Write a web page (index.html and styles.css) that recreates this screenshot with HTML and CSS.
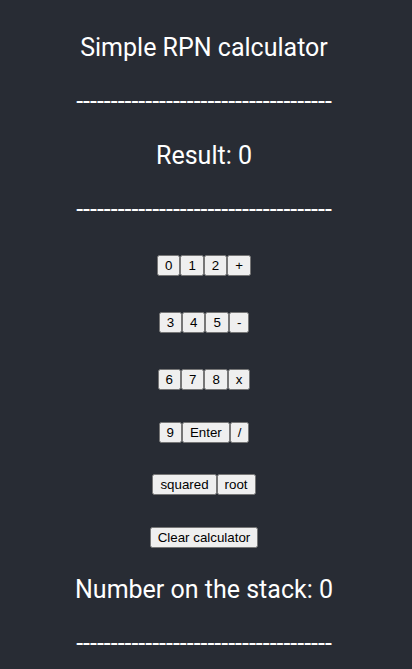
FILE: index.html
```html
<!DOCTYPE html>
<html lang="en">
<head>
<meta charset="utf-8">
<title>Simple RPN calculator</title>
<link rel="stylesheet" href="styles.css">
</head>
<body>
<div class="app">
  <p class="line title">Simple RPN calculator</p>
  <p class="line rule">-------------------------------------</p>
  <p class="line">Result: 0</p>
  <p class="line rule">-------------------------------------</p>
  <div class="keys first"><button>0</button><button>1</button><button>2</button><button>+</button></div>
  <div class="keys wide"><button>3</button><button>4</button><button>5</button><button>-</button></div>
  <div class="keys wide"><button>6</button><button>7</button><button>8</button><button>x</button></div>
  <div class="keys"><button>9</button><button>Enter</button><button>/</button></div>
  <div class="keys first"><button>squared</button><button>root</button></div>
  <div class="keys"><button>Clear calculator</button></div>
  <p class="line stack">Number on the stack: 0</p>
  <p class="line rule">-------------------------------------</p>
</div>
</body>
</html>
```

FILE: styles.css
```css
html, body {
  margin: 0;
  padding: 0;
  background: #282c34;
}

.app {
  min-height: 100vh;
  display: flex;
  flex-direction: column;
  align-items: center;
  padding: 33px 4px 0 0;
  box-sizing: border-box;
  background: #282c34;
  color: #ffffff;
  font-family: Roboto, "Noto Sans", sans-serif;
  font-size: 25px;
  text-align: center;
}

.line {
  margin: 0 0 25px 0;
  line-height: 29px;
  white-space: nowrap;
}

.line.rule {
  margin-bottom: 0;
}

.line.rule + .line {
  margin-top: 25px;
}

.keys {
  display: flex;
  justify-content: center;
  gap: 0;
  margin-top: 32px;
}

.keys.first {
  margin-top: 31px;
}

.keys.wide {
  margin-top: 36px;
}

.keys + .line {
  margin-top: 27px;
}

.keys button {
  font-family: "Liberation Sans", Arial, sans-serif;
  font-size: 13.333px;
  margin: 0;
}
```
